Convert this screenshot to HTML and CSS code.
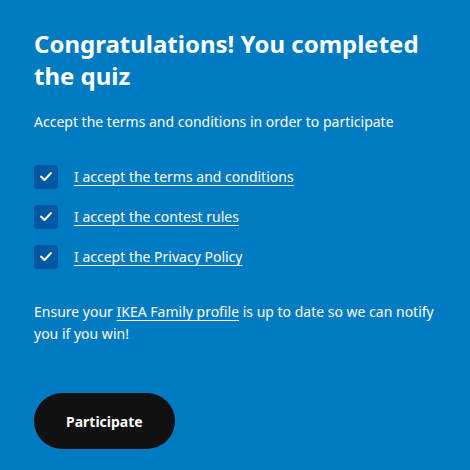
FILE: index.html
```html
<!DOCTYPE html>
<html lang="en">
<head>
    <meta charset="UTF-8">
    <meta name="viewport" content="width=device-width, initial-scale=1.0">
    <title>Quiz completed</title>
    <link rel="stylesheet" href="styles.css">
</head>
<body>
    <div class="panel">
        <h1>Congratulations! You completed the quiz</h1>
        <p class="intro">Accept the terms and conditions in order to participate</p>
        <div class="checks">
            <label class="check">
                <span class="box">
                    <svg width="24" height="24" viewBox="0 0 24 24"><path d="M7 11.5 10.5 15 17 8" fill="none" stroke="#fff" stroke-width="2" stroke-linecap="round" stroke-linejoin="round"/></svg>
                </span>
                <a href="#">I accept the terms and conditions</a>
            </label>
            <label class="check">
                <span class="box">
                    <svg width="24" height="24" viewBox="0 0 24 24"><path d="M7 11.5 10.5 15 17 8" fill="none" stroke="#fff" stroke-width="2" stroke-linecap="round" stroke-linejoin="round"/></svg>
                </span>
                <a href="#">I accept the contest rules</a>
            </label>
            <label class="check">
                <span class="box">
                    <svg width="24" height="24" viewBox="0 0 24 24"><path d="M7 11.5 10.5 15 17 8" fill="none" stroke="#fff" stroke-width="2" stroke-linecap="round" stroke-linejoin="round"/></svg>
                </span>
                <a href="#">I accept the Privacy Policy</a>
            </label>
        </div>
        <p class="note">Ensure your <a href="#">IKEA Family profile</a> is up to date so we can notify you if you win!</p>
        <button class="btn">Participate</button>
    </div>
</body>
</html>
```
FILE: styles.css
```css
body {
    margin: 0;
    background-color: #007bc1;
    color: #fff;
    font-family: "Noto Sans", Arial, sans-serif;
    font-size: 14px;
    line-height: 22px;
}
.panel {
    padding: 28px 34px 0;
    width: 402px;
}
h1 {
    margin: 0;
    font-size: 24px;
    line-height: 32px;
    font-weight: bold;
}
.intro {
    margin: 19px 0 0;
}
.checks {
    margin-top: 32px;
    display: flex;
    flex-direction: column;
    gap: 16px;
}
.check {
    display: flex;
    align-items: center;
    gap: 16px;
    height: 24px;
}
.box {
    width: 24px;
    height: 24px;
    border-radius: 4px;
    background-color: #0058a3;
    display: flex;
}
a {
    color: #fff;
    text-decoration: underline;
    text-underline-offset: 3px;
}
.note {
    margin: 32px 0 0;
}
.btn {
    margin-top: 48px;
    height: 56px;
    padding: 0 32px;
    border: 0;
    border-radius: 28px;
    background-color: #111;
    color: #fff;
    font-family: "Noto Sans", Arial, sans-serif;
    font-size: 14px;
    font-weight: bold;
}
```
